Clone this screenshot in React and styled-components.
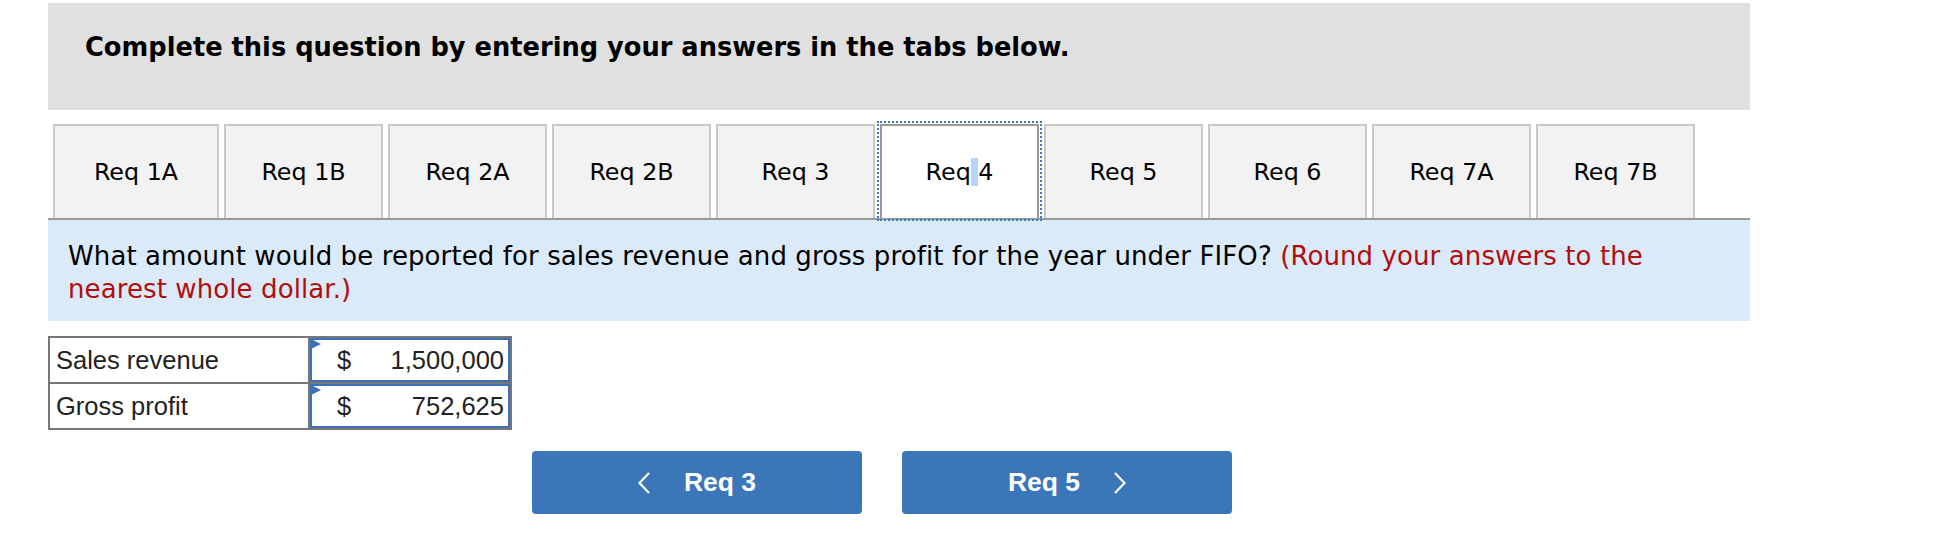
import React from 'react'
import styled, { createGlobalStyle } from 'styled-components'

const GlobalStyle = createGlobalStyle`
  body {
    margin: 0;
    background: #fff;
    font-family: "DejaVu Sans", Verdana, sans-serif;
  }
`

const tabs = ['Req 1A', 'Req 1B', 'Req 2A', 'Req 2B', 'Req 3', 'Req 4', 'Req 5', 'Req 6', 'Req 7A', 'Req 7B']
const rows = [
  { label: 'Sales revenue', value: '1,500,000' },
  { label: 'Gross profit', value: '752,625' }
]

export default function App() {
  return (
    <>
      <GlobalStyle />
      <PageStyled>
        <HeaderStyled>Complete this question by entering your answers in the tabs below.</HeaderStyled>
        <TabBarStyled>
          {tabs.map((t, i) => (
            <TabStyled key={t} active={t === 'Req 4'} wide={i === 0}>
              {t === 'Req 4' ? (
                <>
                  Req<Selection> </Selection>4
                </>
              ) : (
                t
              )}
            </TabStyled>
          ))}
        </TabBarStyled>
        <QuestionStyled>
          What amount would be reported for sales revenue and gross profit for the year under FIFO?{' '}
          <span className="hint">(Round your answers to the nearest whole dollar.)</span>
        </QuestionStyled>
        <AnswerTable>
          <tbody>
            {rows.map((r) => (
              <tr key={r.label}>
                <LabelCell>{r.label}</LabelCell>
                <InputCell>
                  <InputBox>
                    <span>$</span>
                    <span>{r.value}</span>
                  </InputBox>
                </InputCell>
              </tr>
            ))}
          </tbody>
        </AnswerTable>
        <NavStyled>
          <NavButton>
            <Chevron dir="left" />
            <span>Req 3</span>
          </NavButton>
          <NavButton>
            <span>Req 5</span>
            <Chevron dir="right" />
          </NavButton>
        </NavStyled>
      </PageStyled>
    </>
  )
}

function Chevron({ dir }) {
  return (
    <svg width="12" height="22" viewBox="0 0 12 22">
      <polyline
        points={dir === 'left' ? '11,1 1.5,11 11,21' : '1,1 10.5,11 1,21'}
        fill="none"
        stroke="#fff"
        strokeWidth="2.2"
      />
    </svg>
  )
}

const PageStyled = styled.div`
  width: 1702px;
  margin-left: 48px;
  padding-top: 3px;
`

const HeaderStyled = styled.div`
  height: 107px;
  box-sizing: border-box;
  background: #e0e0e0;
  padding: 26px 0 0 37px;
  font-size: 25.7px;
  line-height: 36px;
  font-weight: bold;
  color: #000;
`

const TabBarStyled = styled.div`
  display: flex;
  gap: 5px;
  margin-top: 14px;
  padding-left: 5px;
`

const TabStyled = styled.div`
  width: ${(p) => (p.wide ? '166px' : '159px')};
  height: 94px;
  box-sizing: border-box;
  display: flex;
  align-items: center;
  justify-content: center;
  font-size: 23.8px;
  color: #000;
  background: ${(p) => (p.active ? '#fff' : '#f2f2f2')};
  border: 2px solid ${(p) => (p.active ? '#999' : '#c8c8c8')};
  border-bottom: none;
  outline: ${(p) => (p.active ? '2px dotted #3b7bc4' : 'none')};
  outline-offset: 1px;
  position: relative;
  z-index: ${(p) => (p.active ? 1 : 0)};
`

const Selection = styled.span`
  background: #b4d5fe;
  white-space: pre;
`

const QuestionStyled = styled.div`
  background: #dbeaf8;
  border-top: 2px solid #999;
  padding: 20px 20px 15px 20px;
  font-size: 26px;
  line-height: 33px;
  letter-spacing: 0.1px;
  color: #000;
  .hint {
    color: #b20d0d;
  }
`

const AnswerTable = styled.table`
  margin-top: 15px;
  border-collapse: collapse;
  border: 2px solid #777;
  font-family: "Liberation Sans", Arial, sans-serif;
  font-size: 25.5px;
  color: #222;
`

const LabelCell = styled.td`
  width: 252px;
  height: 44px;
  padding: 0 0 0 6px;
  border: 2px solid #777;
`

const InputCell = styled.td`
  width: 200px;
  height: 44px;
  padding: 0;
  border: 2px solid #777;
`

const InputBox = styled.div`
  position: relative;
  height: 44px;
  box-sizing: border-box;
  border: 2px solid #3a71b7;
  display: flex;
  align-items: center;
  justify-content: space-between;
  padding: 0 4px 0 25px;
  &::before {
    content: '';
    position: absolute;
    left: -1px;
    top: -1px;
    border-left: 10px solid #3a71b7;
    border-top: 5px solid transparent;
    border-bottom: 5px solid transparent;
  }
`

const NavStyled = styled.div`
  display: flex;
  gap: 40px;
  margin-top: 21px;
  padding-left: 484px;
`

const NavButton = styled.button`
  width: 330px;
  height: 63px;
  border: none;
  border-radius: 4px;
  background: #3a76b8;
  color: #fff;
  font-family: "Liberation Sans", Arial, sans-serif;
  font-weight: bold;
  font-size: 26.5px;
  display: flex;
  align-items: center;
  justify-content: center;
  gap: 34px;
  padding: 0;
`
